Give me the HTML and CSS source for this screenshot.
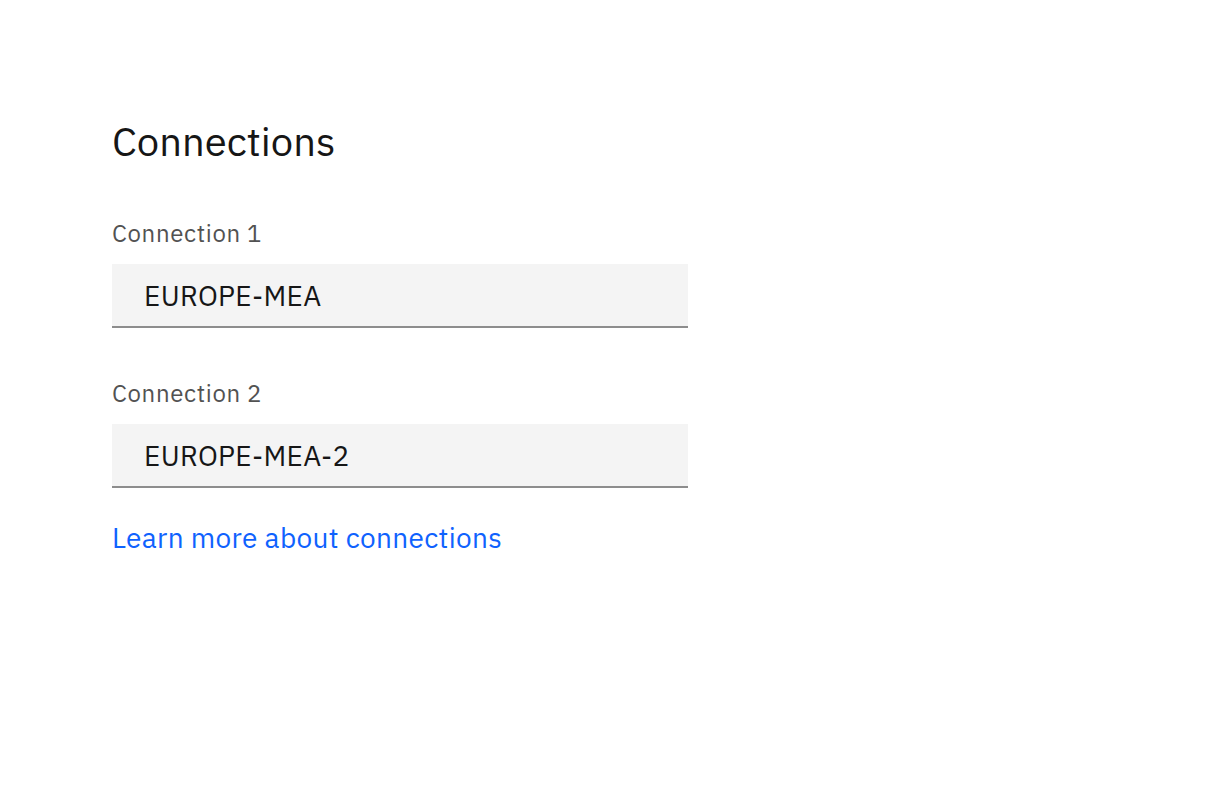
FILE: index.html
```html
<!DOCTYPE html>
<html lang="en">
<head>
<meta charset="utf-8">
<title>Connections</title>
<link rel="stylesheet" href="styles.css">
</head>
<body>
<main class="page">
  <h1 class="title">Connections</h1>
  <div class="field">
    <label class="label" for="c1">Connection 1</label>
    <input class="input" id="c1" type="text" value="EUROPE-MEA">
  </div>
  <div class="field">
    <label class="label" for="c2">Connection 2</label>
    <input class="input" id="c2" type="text" value="EUROPE-MEA-2">
  </div>
  <a class="link" href="#">Learn more about connections</a>
</main>
</body>
</html>
```
FILE: styles.css
```css
html, body {
  margin: 0;
  padding: 0;
  background: #ffffff;
}
body {
  font-family: "IBM Plex Sans", "Noto Sans", "Liberation Sans", sans-serif;
  color: #161616;
}
.page {
  padding: 115px 112px 0;
  display: flex;
  flex-direction: column;
  align-items: flex-start;
}
.title {
  margin: 0;
  font-size: 40px;
  line-height: 52px;
  font-weight: 400;
  color: #161616;
}
.field {
  display: flex;
  flex-direction: column;
  width: 576px;
}
.field:first-of-type {
  margin-top: 50px;
}
.field + .field {
  margin-top: 49px;
}
.label {
  font-size: 24px;
  line-height: 32px;
  letter-spacing: 0.64px;
  color: #525252;
  margin-bottom: 15px;
}
.input {
  box-sizing: border-box;
  width: 576px;
  height: 64px;
  margin: 0;
  padding: 0 32px;
  border: none;
  border-bottom: 2px solid #8d8d8d;
  background: #f4f4f4;
  font-family: inherit;
  font-size: 28px;
  letter-spacing: 0.32px;
  color: #161616;
  outline: none;
}
.link {
  margin-top: 32px;
  font-size: 28px;
  line-height: 36px;
  letter-spacing: 0.32px;
  color: #0f62fe;
  text-decoration: none;
}
```
